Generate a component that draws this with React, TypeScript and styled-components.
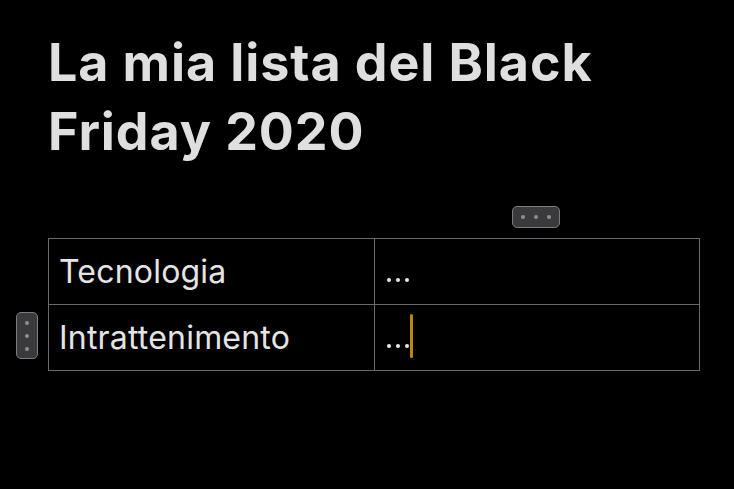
import React from "react";
import styled, { createGlobalStyle } from "styled-components";

const Global = createGlobalStyle`
  html, body { margin: 0; padding: 0; background: #000; }
  body { font-family: Inter, "Noto Sans", "Liberation Sans", sans-serif; }
`;

const Page = styled.div`
  width: 734px;
  height: 489px;
  background: #000;
  padding: 28px 35px 0 48px;
  box-sizing: border-box;
  overflow: hidden;
`;

const Title = styled.h1`
  margin: 0;
  font-size: 52px;
  line-height: 69px;
  font-weight: 700;
  color: #dfdfdf;
  letter-spacing: 0.9px;
  width: 620px;
`;

const TableWrap = styled.div`
  position: relative;
  margin-top: 72px;
  width: 652px;
`;

const Table = styled.div`
  display: grid;
  grid-template-columns: 326px 1fr;
  border-top: 1px solid #6b6b6b;
  border-left: 1px solid #6b6b6b;
`;

const Cell = styled.div`
  height: 66px;
  border-right: 1px solid #6b6b6b;
  border-bottom: 1px solid #6b6b6b;
  display: flex;
  align-items: center;
  padding-left: 10px;
  font-size: 32px;
  letter-spacing: 0.2px;
  color: #e4e4e4;
  box-sizing: border-box;
`;

const Dots = styled.span`
  display: inline-flex;
  align-items: center;
  gap: 5px;
  height: 4px;
  margin-top: 16px;
  margin-left: 2px;
`;

const Dot = styled.span`
  width: 4px;
  height: 4px;
  border-radius: 50%;
  background: #e8e8e8;
`;

const Caret = styled.span`
  width: 3px;
  height: 44px;
  border-radius: 1.5px;
  background: #bb870c;
  margin-left: 1px;
  margin-top: -4px;
`;

const Handle = styled.div<{ $vertical?: boolean }>`
  position: absolute;
  box-sizing: border-box;
  background: #3a3a3c;
  border: 1px solid #7c7c80;
  border-radius: 5px;
  display: flex;
  flex-direction: ${(p) => (p.$vertical ? "column" : "row")};
  align-items: center;
  justify-content: center;
  gap: 9px;
`;

const HandleDot = styled.span`
  width: 4px;
  height: 4px;
  border-radius: 50%;
  background: #8e8e93;
`;

const TopHandle = styled(Handle)`
  top: -32px;
  left: 464px;
  width: 48px;
  height: 22px;
`;

const SideHandle = styled(Handle)`
  top: 74px;
  left: -32px;
  width: 22px;
  height: 47px;
`;

const Ellipsis = ({ caret }: { caret?: boolean }) => (
  <>
    <Dots>
      <Dot />
      <Dot />
      <Dot />
    </Dots>
    {caret && <Caret />}
  </>
);

export default function App() {
  return (
    <Page>
      <Global />
      <Title>La mia lista del Black Friday 2020</Title>
      <TableWrap>
        <TopHandle>
          <HandleDot />
          <HandleDot />
          <HandleDot />
        </TopHandle>
        <SideHandle $vertical>
          <HandleDot />
          <HandleDot />
          <HandleDot />
        </SideHandle>
        <Table>
          <Cell>Tecnologia</Cell>
          <Cell>
            <Ellipsis />
          </Cell>
          <Cell>Intrattenimento</Cell>
          <Cell>
            <Ellipsis caret />
          </Cell>
        </Table>
      </TableWrap>
    </Page>
  );
}
